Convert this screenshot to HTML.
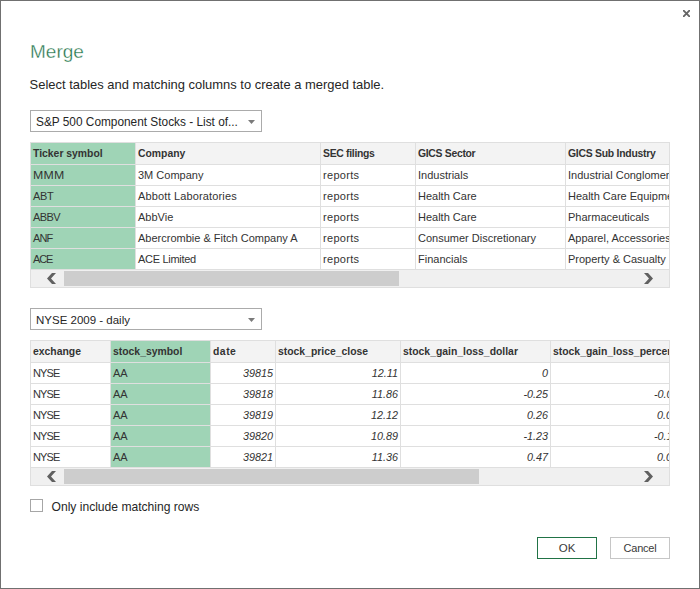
<!DOCTYPE html>
<html><head><meta charset="utf-8"><title>Merge</title>
<style>
html,body{margin:0;padding:0;background:#fff;}
body{width:700px;height:589px;position:relative;overflow:hidden;font-family:"Liberation Sans", sans-serif;color:#333333;}
</style></head><body>
<div style="position:absolute;left:0;top:0;width:698px;height:587px;border:1px solid #707070;"></div>
<svg style="position:absolute;left:683px;top:10px" width="7" height="7" viewBox="0 0 7 7"><path d="M0 0 L7 7 M7 0 L0 7" stroke="#666" stroke-width="1.9" fill="none"/></svg>
<div style="position:absolute;left:30px;top:41px;font-size:19px;line-height:22px;color:#217348;-webkit-text-stroke:0.35px #fff;white-space:nowrap">Merge</div>
<div style="position:absolute;left:29.6px;top:77px;font-size:12.95px;line-height:16px;color:#262626;white-space:nowrap">Select tables and matching columns to create a merged table.</div>
<div style="position:absolute;left:30px;top:110px;width:230px;height:20px;border:1px solid #ababab;background:#fff"></div>
<div style="position:absolute;left:36px;top:114px;font-size:11.85px;line-height:16px;color:#262626;white-space:nowrap">S&amp;P 500 Component Stocks - List of...</div>
<svg style="position:absolute;left:248px;top:120px" width="7" height="5" viewBox="0 0 7 5"><path d="M0 0 L7 0 L3.5 4 Z" fill="#7a7a7a"/></svg>
<div style="position:absolute;left:30px;top:308px;width:230px;height:20px;border:1px solid #ababab;background:#fff"></div>
<div style="position:absolute;left:36px;top:312px;font-size:11.5px;line-height:16px;color:#262626;white-space:nowrap">NYSE 2009 - daily</div>
<svg style="position:absolute;left:248px;top:318px" width="7" height="5" viewBox="0 0 7 5"><path d="M0 0 L7 0 L3.5 4 Z" fill="#7a7a7a"/></svg>

<div style="position:absolute;left:30px;top:142px;width:638px;height:144px;border:1px solid #dfdfdf;background:#fff;overflow:hidden"></div>
<div style="position:absolute;left:31px;top:143px;width:638px;height:21px;background:#f3f3f3"></div>
<div style="position:absolute;left:31px;top:143px;width:104px;height:126px;background:#9fd4b6"></div>
<div style="position:absolute;left:31px;top:164px;width:638px;height:1px;background:#dfdfdf"></div>
<div style="position:absolute;left:31px;top:185px;width:638px;height:1px;background:#dfdfdf"></div>
<div style="position:absolute;left:31px;top:206px;width:638px;height:1px;background:#dfdfdf"></div>
<div style="position:absolute;left:31px;top:227px;width:638px;height:1px;background:#dfdfdf"></div>
<div style="position:absolute;left:31px;top:248px;width:638px;height:1px;background:#dfdfdf"></div>
<div style="position:absolute;left:31px;top:269px;width:638px;height:1px;background:#dfdfdf"></div>
<div style="position:absolute;left:135px;top:143px;width:1px;height:126px;background:#dfdfdf"></div>
<div style="position:absolute;left:320px;top:143px;width:1px;height:126px;background:#dfdfdf"></div>
<div style="position:absolute;left:415px;top:143px;width:1px;height:126px;background:#dfdfdf"></div>
<div style="position:absolute;left:565px;top:143px;width:1px;height:126px;background:#dfdfdf"></div>
<div style="position:absolute;left:31px;top:270px;width:638px;height:17px;background:#f0f0f0"></div>
<div style="position:absolute;left:64px;top:271px;width:335px;height:15px;background:#cdcdcd"></div>
<svg style="position:absolute;left:46px;top:270px" width="12" height="17" viewBox="0 0 12 17"><path d="M10 3 L6 3 L1 8.5 L6 14 L10 14 L5 8.5 Z" fill="#606060"/></svg>
<svg style="position:absolute;left:643px;top:270px" width="12" height="17" viewBox="0 0 12 17"><path d="M1 3 L5 3 L10 8.5 L5 14 L1 14 L6 8.5 Z" fill="#606060"/></svg>
<div style="position:absolute;left:31px;top:143px;width:638px;height:126px;overflow:hidden">
<div style="position:absolute;top:1px;height:20px;line-height:20px;white-space:nowrap;font-size:10.4px;letter-spacing:0.0px;font-weight:bold;left:2px;">Ticker symbol</div>
<div style="position:absolute;top:1px;height:20px;line-height:20px;white-space:nowrap;font-size:10.4px;letter-spacing:0.0px;font-weight:bold;left:107px;">Company</div>
<div style="position:absolute;top:1px;height:20px;line-height:20px;white-space:nowrap;font-size:10.4px;letter-spacing:-0.3px;font-weight:bold;left:292px;">SEC filings</div>
<div style="position:absolute;top:1px;height:20px;line-height:20px;white-space:nowrap;font-size:10.4px;letter-spacing:-0.3px;font-weight:bold;left:387px;">GICS Sector</div>
<div style="position:absolute;top:1px;height:20px;line-height:20px;white-space:nowrap;font-size:10.4px;letter-spacing:-0.25px;font-weight:bold;left:537px;">GICS Sub Industry</div>
<div style="position:absolute;transform:scaleX(1.12);transform-origin:left center;top:22px;height:20px;line-height:20px;white-space:nowrap;font-size:11.0px;letter-spacing:0.2px;left:2px;">MMM</div>
<div style="position:absolute;top:22px;height:20px;line-height:20px;white-space:nowrap;font-size:11.0px;letter-spacing:0.0px;left:107px;">3M Company</div>
<div style="position:absolute;top:22px;height:20px;line-height:20px;white-space:nowrap;font-size:11.0px;letter-spacing:0.3px;left:292px;">reports</div>
<div style="position:absolute;top:22px;height:20px;line-height:20px;white-space:nowrap;font-size:11.0px;letter-spacing:0.0px;left:387px;">Industrials</div>
<div style="position:absolute;top:22px;height:20px;line-height:20px;white-space:nowrap;font-size:11.0px;letter-spacing:0.0px;left:537px;">Industrial Conglomerates</div>
<div style="position:absolute;top:43px;height:20px;line-height:20px;white-space:nowrap;font-size:11.0px;letter-spacing:-0.3px;left:2px;">ABT</div>
<div style="position:absolute;top:43px;height:20px;line-height:20px;white-space:nowrap;font-size:11.0px;letter-spacing:0.15px;left:107px;">Abbott Laboratories</div>
<div style="position:absolute;top:43px;height:20px;line-height:20px;white-space:nowrap;font-size:11.0px;letter-spacing:0.3px;left:292px;">reports</div>
<div style="position:absolute;top:43px;height:20px;line-height:20px;white-space:nowrap;font-size:11.0px;letter-spacing:0.0px;left:387px;">Health Care</div>
<div style="position:absolute;top:43px;height:20px;line-height:20px;white-space:nowrap;font-size:11.0px;letter-spacing:0.0px;left:537px;">Health Care Equipment</div>
<div style="position:absolute;top:64px;height:20px;line-height:20px;white-space:nowrap;font-size:11.0px;letter-spacing:-0.6px;left:2px;">ABBV</div>
<div style="position:absolute;top:64px;height:20px;line-height:20px;white-space:nowrap;font-size:11.0px;letter-spacing:0.0px;left:107px;">AbbVie</div>
<div style="position:absolute;top:64px;height:20px;line-height:20px;white-space:nowrap;font-size:11.0px;letter-spacing:0.3px;left:292px;">reports</div>
<div style="position:absolute;top:64px;height:20px;line-height:20px;white-space:nowrap;font-size:11.0px;letter-spacing:0.0px;left:387px;">Health Care</div>
<div style="position:absolute;top:64px;height:20px;line-height:20px;white-space:nowrap;font-size:11.0px;letter-spacing:0.0px;left:537px;">Pharmaceuticals</div>
<div style="position:absolute;top:85px;height:20px;line-height:20px;white-space:nowrap;font-size:11.0px;letter-spacing:-0.9px;left:2px;">ANF</div>
<div style="position:absolute;top:85px;height:20px;line-height:20px;white-space:nowrap;font-size:11.0px;letter-spacing:0.0px;left:107px;">Abercrombie &amp; Fitch Company A</div>
<div style="position:absolute;top:85px;height:20px;line-height:20px;white-space:nowrap;font-size:11.0px;letter-spacing:0.3px;left:292px;">reports</div>
<div style="position:absolute;top:85px;height:20px;line-height:20px;white-space:nowrap;font-size:11.0px;letter-spacing:0.0px;left:387px;">Consumer Discretionary</div>
<div style="position:absolute;top:85px;height:20px;line-height:20px;white-space:nowrap;font-size:11.0px;letter-spacing:0.0px;left:537px;">Apparel, Accessories &amp; Luxury Goods</div>
<div style="position:absolute;top:106px;height:20px;line-height:20px;white-space:nowrap;font-size:11.0px;letter-spacing:-1.1px;left:2px;">ACE</div>
<div style="position:absolute;top:106px;height:20px;line-height:20px;white-space:nowrap;font-size:11.0px;letter-spacing:-0.3px;left:107px;">ACE Limited</div>
<div style="position:absolute;top:106px;height:20px;line-height:20px;white-space:nowrap;font-size:11.0px;letter-spacing:0.3px;left:292px;">reports</div>
<div style="position:absolute;top:106px;height:20px;line-height:20px;white-space:nowrap;font-size:11.0px;letter-spacing:0.0px;left:387px;">Financials</div>
<div style="position:absolute;top:106px;height:20px;line-height:20px;white-space:nowrap;font-size:11.0px;letter-spacing:0.0px;left:537px;">Property &amp; Casualty Insurance</div>
</div>
<div style="position:absolute;left:30px;top:340px;width:638px;height:144px;border:1px solid #dfdfdf;background:#fff;overflow:hidden"></div>
<div style="position:absolute;left:31px;top:341px;width:638px;height:21px;background:#f3f3f3"></div>
<div style="position:absolute;left:111px;top:341px;width:99px;height:126px;background:#9fd4b6"></div>
<div style="position:absolute;left:31px;top:362px;width:638px;height:1px;background:#dfdfdf"></div>
<div style="position:absolute;left:31px;top:383px;width:638px;height:1px;background:#dfdfdf"></div>
<div style="position:absolute;left:31px;top:404px;width:638px;height:1px;background:#dfdfdf"></div>
<div style="position:absolute;left:31px;top:425px;width:638px;height:1px;background:#dfdfdf"></div>
<div style="position:absolute;left:31px;top:446px;width:638px;height:1px;background:#dfdfdf"></div>
<div style="position:absolute;left:31px;top:467px;width:638px;height:1px;background:#dfdfdf"></div>
<div style="position:absolute;left:110px;top:341px;width:1px;height:126px;background:#dfdfdf"></div>
<div style="position:absolute;left:210px;top:341px;width:1px;height:126px;background:#dfdfdf"></div>
<div style="position:absolute;left:275px;top:341px;width:1px;height:126px;background:#dfdfdf"></div>
<div style="position:absolute;left:400px;top:341px;width:1px;height:126px;background:#dfdfdf"></div>
<div style="position:absolute;left:550px;top:341px;width:1px;height:126px;background:#dfdfdf"></div>
<div style="position:absolute;left:31px;top:468px;width:638px;height:17px;background:#f0f0f0"></div>
<div style="position:absolute;left:64px;top:469px;width:415px;height:15px;background:#cdcdcd"></div>
<svg style="position:absolute;left:46px;top:468px" width="12" height="17" viewBox="0 0 12 17"><path d="M10 3 L6 3 L1 8.5 L6 14 L10 14 L5 8.5 Z" fill="#606060"/></svg>
<svg style="position:absolute;left:643px;top:468px" width="12" height="17" viewBox="0 0 12 17"><path d="M1 3 L5 3 L10 8.5 L5 14 L1 14 L6 8.5 Z" fill="#606060"/></svg>
<div style="position:absolute;left:31px;top:341px;width:638px;height:126px;overflow:hidden">
<div style="position:absolute;top:1px;height:20px;line-height:20px;white-space:nowrap;font-size:10.4px;letter-spacing:0.0px;font-weight:bold;left:2px;">exchange</div>
<div style="position:absolute;top:1px;height:20px;line-height:20px;white-space:nowrap;font-size:10.4px;letter-spacing:0.0px;font-weight:bold;left:82px;">stock_symbol</div>
<div style="position:absolute;top:1px;height:20px;line-height:20px;white-space:nowrap;font-size:10.4px;letter-spacing:0.5px;font-weight:bold;left:182px;">date</div>
<div style="position:absolute;top:1px;height:20px;line-height:20px;white-space:nowrap;font-size:10.4px;letter-spacing:0.0px;font-weight:bold;left:247px;">stock_price_close</div>
<div style="position:absolute;top:1px;height:20px;line-height:20px;white-space:nowrap;font-size:10.4px;letter-spacing:0.0px;font-weight:bold;left:372px;">stock_gain_loss_dollar</div>
<div style="position:absolute;top:1px;height:20px;line-height:20px;white-space:nowrap;font-size:10.4px;letter-spacing:0.0px;font-weight:bold;left:522px;">stock_gain_loss_percent</div>
<div style="position:absolute;top:22px;height:20px;line-height:20px;white-space:nowrap;font-size:11.0px;letter-spacing:-0.85px;left:2px;">NYSE</div>
<div style="position:absolute;top:22px;height:20px;line-height:20px;white-space:nowrap;font-size:11.0px;letter-spacing:0.0px;left:82px;">AA</div>
<div style="position:absolute;top:22px;height:20px;line-height:20px;white-space:nowrap;font-size:10.8px;letter-spacing:0.0px;font-style:italic;right:396px;text-align:right;">39815</div>
<div style="position:absolute;top:22px;height:20px;line-height:20px;white-space:nowrap;font-size:10.8px;letter-spacing:0.0px;font-style:italic;right:271px;text-align:right;">12.11</div>
<div style="position:absolute;top:22px;height:20px;line-height:20px;white-space:nowrap;font-size:10.8px;letter-spacing:0.0px;font-style:italic;right:121px;text-align:right;">0</div>
<div style="position:absolute;top:43px;height:20px;line-height:20px;white-space:nowrap;font-size:11.0px;letter-spacing:-0.85px;left:2px;">NYSE</div>
<div style="position:absolute;top:43px;height:20px;line-height:20px;white-space:nowrap;font-size:11.0px;letter-spacing:0.0px;left:82px;">AA</div>
<div style="position:absolute;top:43px;height:20px;line-height:20px;white-space:nowrap;font-size:10.8px;letter-spacing:0.0px;font-style:italic;right:396px;text-align:right;">39818</div>
<div style="position:absolute;top:43px;height:20px;line-height:20px;white-space:nowrap;font-size:10.8px;letter-spacing:0.0px;font-style:italic;right:271px;text-align:right;">11.86</div>
<div style="position:absolute;top:43px;height:20px;line-height:20px;white-space:nowrap;font-size:10.8px;letter-spacing:0.0px;font-style:italic;right:121px;text-align:right;">-0.25</div>
<div style="position:absolute;top:64px;height:20px;line-height:20px;white-space:nowrap;font-size:11.0px;letter-spacing:-0.85px;left:2px;">NYSE</div>
<div style="position:absolute;top:64px;height:20px;line-height:20px;white-space:nowrap;font-size:11.0px;letter-spacing:0.0px;left:82px;">AA</div>
<div style="position:absolute;top:64px;height:20px;line-height:20px;white-space:nowrap;font-size:10.8px;letter-spacing:0.0px;font-style:italic;right:396px;text-align:right;">39819</div>
<div style="position:absolute;top:64px;height:20px;line-height:20px;white-space:nowrap;font-size:10.8px;letter-spacing:0.0px;font-style:italic;right:271px;text-align:right;">12.12</div>
<div style="position:absolute;top:64px;height:20px;line-height:20px;white-space:nowrap;font-size:10.8px;letter-spacing:0.0px;font-style:italic;right:121px;text-align:right;">0.26</div>
<div style="position:absolute;top:85px;height:20px;line-height:20px;white-space:nowrap;font-size:11.0px;letter-spacing:-0.85px;left:2px;">NYSE</div>
<div style="position:absolute;top:85px;height:20px;line-height:20px;white-space:nowrap;font-size:11.0px;letter-spacing:0.0px;left:82px;">AA</div>
<div style="position:absolute;top:85px;height:20px;line-height:20px;white-space:nowrap;font-size:10.8px;letter-spacing:0.0px;font-style:italic;right:396px;text-align:right;">39820</div>
<div style="position:absolute;top:85px;height:20px;line-height:20px;white-space:nowrap;font-size:10.8px;letter-spacing:0.0px;font-style:italic;right:271px;text-align:right;">10.89</div>
<div style="position:absolute;top:85px;height:20px;line-height:20px;white-space:nowrap;font-size:10.8px;letter-spacing:0.0px;font-style:italic;right:121px;text-align:right;">-1.23</div>
<div style="position:absolute;top:106px;height:20px;line-height:20px;white-space:nowrap;font-size:11.0px;letter-spacing:-0.85px;left:2px;">NYSE</div>
<div style="position:absolute;top:106px;height:20px;line-height:20px;white-space:nowrap;font-size:11.0px;letter-spacing:0.0px;left:82px;">AA</div>
<div style="position:absolute;top:106px;height:20px;line-height:20px;white-space:nowrap;font-size:10.8px;letter-spacing:0.0px;font-style:italic;right:396px;text-align:right;">39821</div>
<div style="position:absolute;top:106px;height:20px;line-height:20px;white-space:nowrap;font-size:10.8px;letter-spacing:0.0px;font-style:italic;right:271px;text-align:right;">11.36</div>
<div style="position:absolute;top:106px;height:20px;line-height:20px;white-space:nowrap;font-size:10.8px;letter-spacing:0.0px;font-style:italic;right:121px;text-align:right;">0.47</div>
</div>
<div style="position:absolute;left:551px;top:341px;width:118px;height:126px;overflow:hidden">
<div style="position:absolute;left:103px;top:43px;line-height:20px;font-size:10.8px;font-style:italic;white-space:nowrap">-0.0211</div>
<div style="position:absolute;left:106px;top:64px;line-height:20px;font-size:10.8px;font-style:italic;white-space:nowrap">0.0219</div>
<div style="position:absolute;left:103px;top:85px;line-height:20px;font-size:10.8px;font-style:italic;white-space:nowrap">-0.1015</div>
<div style="position:absolute;left:106px;top:106px;line-height:20px;font-size:10.8px;font-style:italic;white-space:nowrap">0.0431</div>
</div>

<div style="position:absolute;left:30px;top:499px;width:11px;height:11px;border:1px solid #a6a6a6;background:#fff"></div>
<div style="position:absolute;left:51.5px;top:500px;font-size:12.1px;line-height:15px;color:#262626;white-space:nowrap">Only include matching rows</div>
<div style="position:absolute;left:537px;top:537px;width:58px;height:20px;border:1px solid #217346;background:#fff;font-size:11.5px;line-height:20px;text-align:center;color:#3a3a3a">OK</div>
<div style="position:absolute;left:610px;top:537px;width:58px;height:20px;border:1px solid #c6c6c6;background:#fff;font-size:11px;letter-spacing:-0.2px;line-height:20px;text-align:center;color:#3a3a3a">Cancel</div>
</body></html>
